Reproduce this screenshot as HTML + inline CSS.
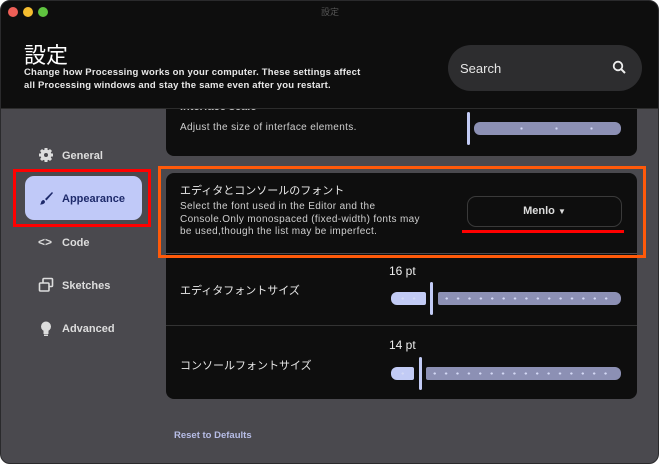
<!DOCTYPE html>
<html><head><meta charset="utf-8"><style>
*{box-sizing:border-box;margin:0;padding:0}
body{width:660px;height:466px;background:#fff;font-family:"Liberation Sans","Noto Sans CJK JP",sans-serif;overflow:hidden;position:relative}
.win{position:absolute;left:0;top:0;width:659px;height:464px;border-radius:10px;background:#4a494e;overflow:hidden;border:1px solid #2a2a2c}
.hdr{position:absolute;left:0;top:0;width:100%;height:108px;background:#0e0e0e;border-bottom:1px solid #2c2c2c;z-index:5}
.dot{position:absolute;top:6px;width:10px;height:10px;border-radius:50%}
.abs{position:absolute}
.card{position:absolute;left:165px;width:471px;background:#0e0e0e}
.t{color:#e8e8e8;font-size:11px}
.d{color:#cfcfcf;font-size:10px;line-height:12.5px;letter-spacing:.35px}
.trk{position:absolute;height:13px;border-radius:6px;background:#8c90b4}
.act{background:#c2cbf5}
.thumb{position:absolute;width:3px;border-radius:2px;background:#c2cbf5}
.side{position:absolute;left:61px;color:#ddd;font-size:11px;font-weight:bold}
.ico{position:absolute;left:37px}
.dots{position:absolute;top:5px;height:3px;left:6px;right:6px;background-image:radial-gradient(circle,#d4d9f5 1px,transparent 1.3px);background-size:11.4px 3px}
</style></head><body>
<div class="win">
<div class="hdr">
<div class="dot" style="left:7px;background:#ee5f57"></div>
<div class="dot" style="left:22px;background:#f5bd2f"></div>
<div class="dot" style="left:37px;background:#5fc43f"></div>
<div class="abs" style="left:320px;top:4px;font-size:9px;color:#555">設定</div>
<div class="abs" style="left:23px;top:37px;font-size:22px;color:#fff">設定</div>
<div class="abs" style="left:23px;top:66px;font-size:9.5px;line-height:12.5px;color:#e8e8e8;font-weight:bold;letter-spacing:.2px">Change how Processing works on your computer. These settings affect<br>all Processing windows and stay the same even after you restart.</div>
<div class="abs" style="left:447px;top:44px;width:194px;height:46px;border-radius:23px;background:#2d2d2f"></div>
<div class="abs" style="left:459px;top:60px;font-size:13px;color:#e6e6e6">Search</div>
<svg class="abs" style="left:611px;top:59px" width="15" height="15" viewBox="0 0 15 15"><circle cx="6" cy="6" r="4.3" stroke="#eee" stroke-width="1.8" fill="none"/><path d="M9.2 9.2L13 13" stroke="#eee" stroke-width="2"/></svg>
</div>

<svg class="ico" style="top:146px" width="16" height="16" viewBox="0 0 16 16"><circle cx="8" cy="8" r="5.5" fill="#ddd"/><g stroke="#ddd" stroke-width="3"><path d="M8 1v14M1 8h14M3 3l10 10M13 3L3 13"/></g><circle cx="8" cy="8" r="2" fill="#4a494e"/></svg>
<div class="side" style="top:149px">General</div>
<div class="abs" style="left:24px;top:175px;width:117px;height:44px;border-radius:9px;background:#c0c9f8"></div>
<svg class="ico" style="top:189px" width="16" height="16" viewBox="0 0 16 16"><path d="M14 2L7 9l1.5 1.5L15 3z M6 10c-2 0-3 1.5-3 3l-1 1.5c3 0 5-1 5-3z" fill="#1e2a6b"/></svg>
<div class="side" style="top:192px;color:#1e2a6b">Appearance</div>
<div class="abs" style="left:37px;top:234px;color:#ddd;font-size:12px;font-weight:bold">&lt;&gt;</div>
<div class="side" style="top:236px">Code</div>
<svg class="ico" style="top:276px" width="16" height="16" viewBox="0 0 16 16"><rect x="5" y="1.5" width="9.5" height="8" rx="1" stroke="#ddd" stroke-width="1.6" fill="none"/><rect x="1.5" y="6" width="9.5" height="8" rx="1" stroke="#ddd" stroke-width="1.6" fill="#4a494e"/></svg>
<div class="side" style="top:279px">Sketches</div>
<svg class="ico" style="top:319px" width="16" height="17" viewBox="0 0 16 17"><circle cx="8" cy="6.5" r="5" fill="#ddd"/><rect x="5.5" y="10" width="5" height="4" fill="#ddd"/><rect x="6" y="14.5" width="4" height="1.5" fill="#ddd"/></svg>
<div class="side" style="top:322px">Advanced</div>

<div class="card" style="top:98px;height:57px;border-radius:0 0 8px 8px">
<div class="abs t" style="left:14px;top:2px;font-weight:bold;color:#bbb">Interface scale</div>
<div class="abs d" style="left:14px;top:23px">Adjust the size of interface elements.</div>
</div>
<div class="thumb" style="left:466px;top:111px;height:33px"></div>
<div class="trk" style="left:473px;top:121px;width:147px"><div class="dots" style="left:30px;right:2px;background-size:35px 3px"></div></div>

<div class="card" style="top:172px;height:80px;border-radius:8px 8px 0 0">
<div class="abs t" style="left:14px;top:9px">エディタとコンソールのフォント</div>
<div class="abs d" style="left:14px;top:28px">Select the font used in the Editor and the<br>Console.Only monospaced (fixed-width) fonts may<br>be used,though the list may be imperfect.</div>
<div class="abs" style="left:301px;top:23px;width:155px;height:31px;border:1px solid #3a3a3a;border-radius:9px;color:#ddd;font-size:11px;font-weight:bold;text-align:center;line-height:29px">Menlo <span style="font-size:8px">▼</span></div>
</div>
<div class="card" style="top:253px;height:145px;border-radius:0 0 8px 8px">
<div class="abs" style="left:0;top:71px;width:100%;height:1px;background:#333"></div>
<div class="abs t" style="left:14px;top:28px">エディタフォントサイズ</div>
<div class="abs t" style="left:14px;top:103px">コンソールフォントサイズ</div>
<div class="abs" style="left:223px;top:10px;color:#eee;font-size:12px">16 pt</div>
<div class="abs" style="left:223px;top:84px;color:#eee;font-size:12px">14 pt</div>
</div>
<div class="trk act" style="left:390px;top:291px;width:35px;border-radius:6px 2px 2px 6px"><div class="dots" style="right:4px"></div></div>
<div class="thumb" style="left:429px;top:281px;height:33px"></div>
<div class="trk" style="left:437px;top:291px;width:183px;border-radius:2px 6px 6px 2px"><div class="dots" style="left:3px"></div></div>
<div class="trk act" style="left:390px;top:366px;width:23px;border-radius:6px 2px 2px 6px"><div class="dots" style="right:2px"></div></div>
<div class="thumb" style="left:418px;top:356px;height:33px"></div>
<div class="trk" style="left:425px;top:366px;width:195px;border-radius:2px 6px 6px 2px"><div class="dots" style="left:3px"></div></div>

<div class="abs" style="left:173px;top:429px;color:#b7bde6;font-size:9.5px;font-weight:bold">Reset to Defaults</div>

<div class="abs" style="left:157px;top:165px;width:488px;height:92px;border:3px solid #ff5a0a"></div>
<div class="abs" style="left:12px;top:168px;width:138px;height:58px;border:3px solid #f00"></div>
<div class="abs" style="left:461px;top:229px;width:162px;height:3px;background:#f00"></div>
</div>
</body></html>
